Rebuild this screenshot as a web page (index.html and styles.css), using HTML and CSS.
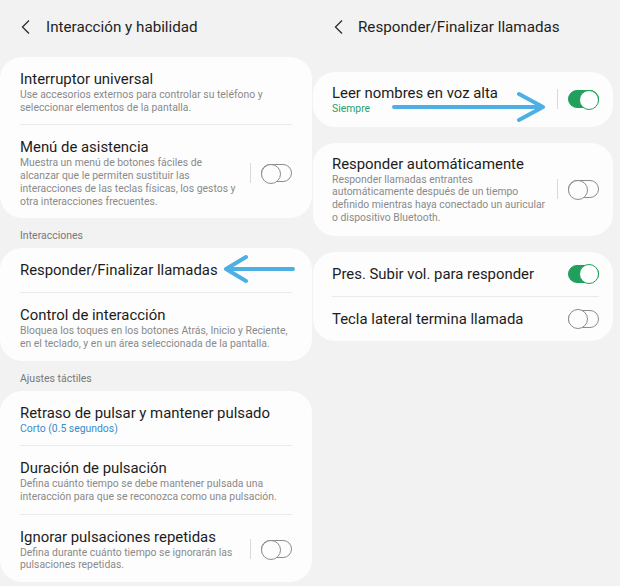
FILE: index.html
```html
<!DOCTYPE html>
<html lang="es">
  <head>
    <meta charset="UTF-8" />
    <meta name="viewport" content="width=device-width, initial-scale=1.0" />
    <link rel="stylesheet" href="styles.css">
    <title>Interacción y habilidad</title>
  </head>
  <body>
    <div class="screens">
      <section class="screen screen-left">
        <header class="bar">
          <svg class="back" width="12" height="16" viewBox="0 0 12 16"><path d="M9 1.5 L2.5 8 L9 14.5" /></svg>
          <h1>Interacción y habilidad</h1>
        </header>

        <div class="card">
          <div class="row">
            <div class="text">
              <div class="title">Interruptor universal</div>
              <div class="sub">Use accesorios externos para controlar su teléfono y seleccionar elementos de la pantalla.</div>
            </div>
          </div>
          <div class="row">
            <div class="text">
              <div class="title">Menú de asistencia</div>
              <div class="sub lines">Muestra un menú de botones fáciles de<br>alcanzar que le permiten sustituir las<br>interacciones de las teclas físicas, los gestos y<br>otra interacciones frecuentes.</div>
            </div>
            <div class="switch"><span class="sep"></span><span class="toggle"></span></div>
          </div>
        </div>

        <div class="group">Interacciones</div>
        <div class="card">
          <div class="row one">
            <div class="text">
              <div class="title">Responder/Finalizar llamadas</div>
            </div>
            <svg class="arrow arrow-left" width="80" height="34" viewBox="0 0 80 34"><path d="M75 16 H10 M28 4 L8 16 L28 28" /></svg>
          </div>
          <div class="row">
            <div class="text">
              <div class="title">Control de interacción</div>
              <div class="sub">Bloquea los toques en los botones Atrás, Inicio y Reciente, en el teclado, y en un área seleccionada de la pantalla.</div>
            </div>
          </div>
        </div>

        <div class="group">Ajustes táctiles</div>
        <div class="card">
          <div class="row">
            <div class="text">
              <div class="title">Retraso de pulsar y mantener pulsado</div>
              <div class="sub value-blue">Corto (0.5 segundos)</div>
            </div>
          </div>
          <div class="row">
            <div class="text">
              <div class="title">Duración de pulsación</div>
              <div class="sub">Defina cuánto tiempo se debe mantener pulsada una interacción para que se reconozca como una pulsación.</div>
            </div>
          </div>
          <div class="row">
            <div class="text">
              <div class="title">Ignorar pulsaciones repetidas</div>
              <div class="sub lines">Defina durante cuánto tiempo se ignorarán las<br>pulsaciones repetidas.</div>
            </div>
            <div class="switch"><span class="sep"></span><span class="toggle"></span></div>
          </div>
        </div>
      </section>

      <section class="screen screen-right">
        <header class="bar">
          <svg class="back" width="12" height="16" viewBox="0 0 12 16"><path d="M9 1.5 L2.5 8 L9 14.5" /></svg>
          <h1>Responder/Finalizar llamadas</h1>
        </header>

        <div class="card">
          <div class="row">
            <div class="text">
              <div class="title">Leer nombres en voz alta</div>
              <div class="sub value-green">Siempre</div>
            </div>
            <div class="switch"><span class="sep"></span><span class="toggle on"></span></div>
            <svg class="arrow arrow-right" width="164" height="34" viewBox="0 0 164 34"><path d="M4 17 H152 M129 4 L153 17 L129 30" /></svg>
          </div>
        </div>

        <div class="card">
          <div class="row">
            <div class="text">
              <div class="title">Responder automáticamente</div>
              <div class="sub lines">Responder llamadas entrantes<br>automáticamente después de un tiempo<br>definido mientras haya conectado un auricular<br>o dispositivo Bluetooth.</div>
            </div>
            <div class="switch"><span class="sep"></span><span class="toggle"></span></div>
          </div>
        </div>

        <div class="card">
          <div class="row one">
            <div class="text">
              <div class="title">Pres. Subir vol. para responder</div>
            </div>
            <div class="switch"><span class="toggle on"></span></div>
          </div>
          <div class="row one">
            <div class="text">
              <div class="title">Tecla lateral termina llamada</div>
            </div>
            <div class="switch"><span class="toggle"></span></div>
          </div>
        </div>
      </section>
    </div>
  </body>
</html>
```

FILE: styles.css
```css
* {
  margin: 0;
  padding: 0;
  box-sizing: border-box;
}
body {
  background-color: rgb(242, 242, 242);
  font-family: Roboto, "Noto Sans", sans-serif;
  color: rgb(28, 28, 28);
}
.screens {
  display: flex;
  gap: 1px;
  width: 620px;
  height: 586px;
  overflow: hidden;
}
.screen-left {
  width: 312px;
}
.screen-right {
  width: 307px;
  padding-right: 7px;
}
.bar {
  display: flex;
  align-items: center;
  height: 20px;
  margin-top: 17px;
  margin-bottom: 20px;
}
.screen-right .bar {
  margin-bottom: 35px;
}
.bar h1 {
  font-size: 15.2px;
  font-weight: 400;
  line-height: 20px;
  color: rgb(30, 30, 30);
}
.back {
  fill: none;
  stroke: rgb(50, 50, 50);
  stroke-width: 1.4;
  margin-left: 20px;
  margin-right: 14px;
}
.screen-right .back {
  margin-left: 20px;
  margin-right: 13px;
}
.card {
  background-color: rgb(253, 253, 253);
  border-radius: 22px;
  padding: 0 20px;
}
.screen-right .card {
  padding: 0 14px 0 19px;
  margin-bottom: 16px;
}
.row {
  position: relative;
  display: flex;
  align-items: center;
  padding: 11px 0;
}
.screen-left .row {
  padding: 12px 0 10px;
}
.row + .row {
  border-top: 1px solid rgb(234, 234, 234);
}
.row.one,
.screen-left .row.one {
  padding: 12px 0;
}
.text {
  flex: 1;
  min-width: 0;
}
.title {
  font-size: 14.9px;
  line-height: 20px;
}
.sub {
  font-size: 10.4px;
  line-height: 12.7px;
  color: rgb(138, 138, 138);
}
.sub.lines {
  white-space: nowrap;
}
.value-blue {
  color: rgb(58, 140, 206);
}
.value-green {
  color: rgb(40, 160, 110);
}
.group {
  font-size: 10.5px;
  line-height: 14px;
  color: rgb(120, 120, 120);
  padding: 11px 20px 5px;
}
.switch {
  display: flex;
  flex-shrink: 0;
  align-items: center;
  gap: 10px;
}
.sep {
  width: 1px;
  height: 20px;
  background-color: rgb(218, 218, 218);
}
.toggle {
  position: relative;
  width: 31px;
  height: 18px;
  border: 1.3px solid rgb(140, 140, 140);
  border-radius: 9px;
}
.toggle::after {
  content: "";
  position: absolute;
  top: -1.3px;
  left: -1.3px;
  width: 18px;
  height: 18px;
  border: 1.3px solid rgb(140, 140, 140);
  border-radius: 50%;
  background-color: rgb(253, 253, 253);
}
.toggle.on {
  background-color: rgb(32, 160, 92);
  border-color: rgb(32, 160, 92);
}
.toggle.on::after {
  left: auto;
  right: -1.3px;
  border-color: rgb(32, 160, 92);
  background-color: white;
}
.arrow {
  position: absolute;
  fill: none;
  stroke: rgb(76, 176, 228);
  stroke-width: 4;
  stroke-linecap: round;
  stroke-linejoin: round;
}
.arrow-left {
  left: 198px;
  top: 5px;
}
.arrow-right {
  left: 58px;
  top: 18px;
}
```
